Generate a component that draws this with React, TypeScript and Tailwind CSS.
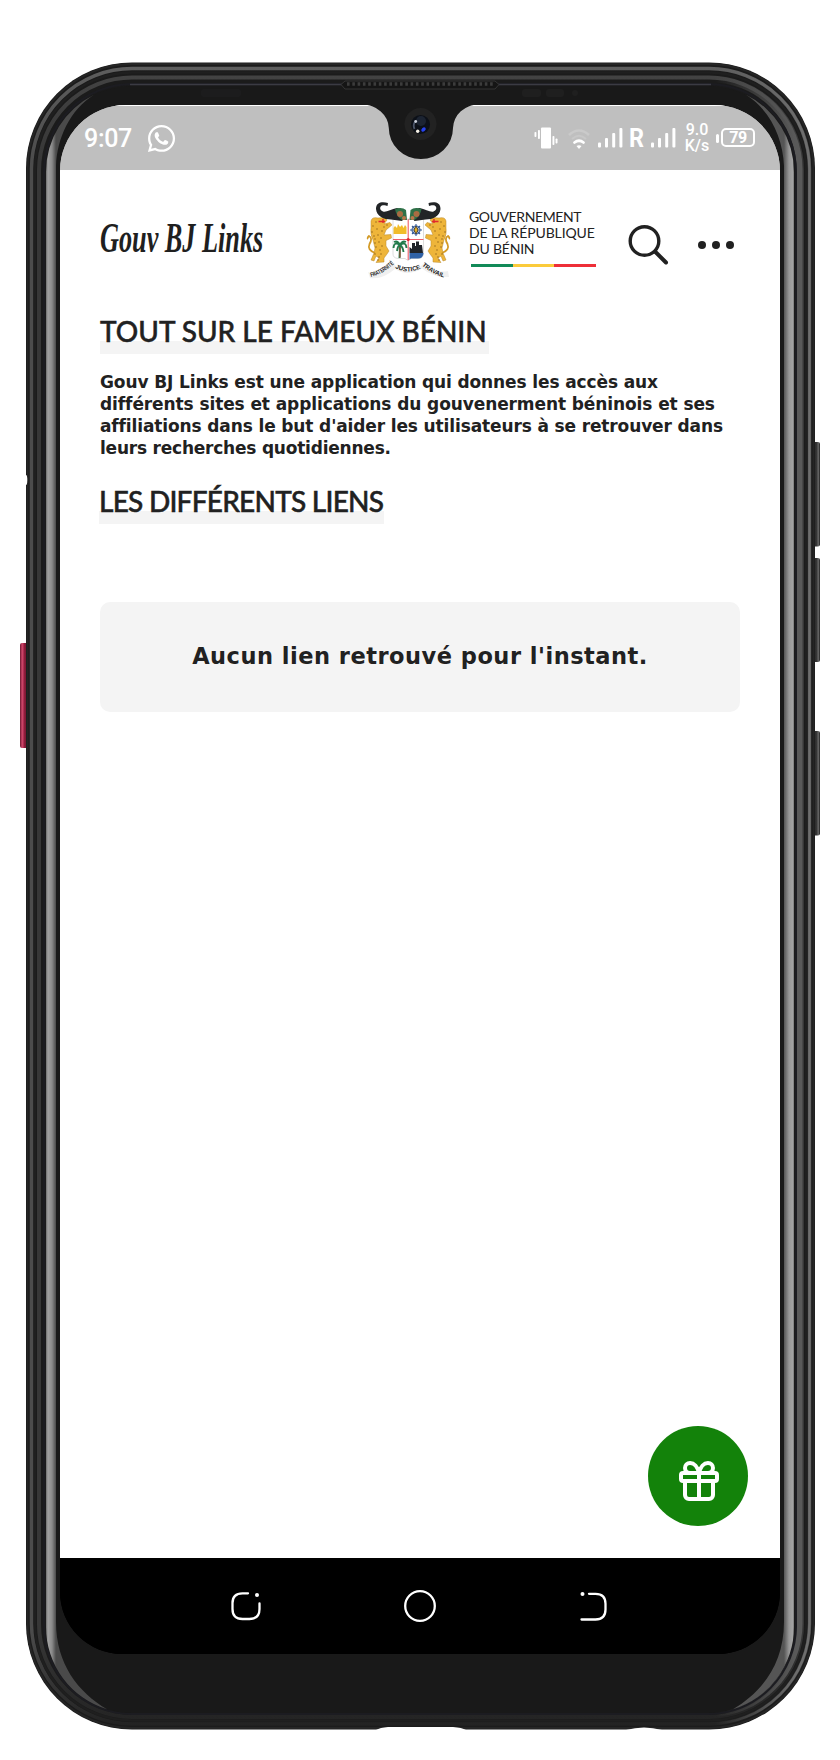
import React from "react";
import { Gift } from "lucide-react";
import { FaWhatsapp } from "react-icons/fa";

const leopardSpots = [
  [7, 25], [11, 28], [6, 31], [12, 34], [9, 38], [13, 41], [10, 46], [14, 49], [9, 53], [13, 56], [16, 30], [18, 26],
  [10, 21], [15, 37], [16, 45], [8, 35], [15, 53], [12, 59], [9, 42], [21, 24],
];

function Shell() {
  return (
    <svg className="absolute inset-0" width="840" height="1760" viewBox="0 0 840 1760" aria-hidden="true">
      <defs>
        <linearGradient id="stripL" x1="46" x2="56" y1="0" y2="0" gradientUnits="userSpaceOnUse">
          <stop offset="0" stopColor="#6e6e6e" />
          <stop offset=".2" stopColor="#a2a2a2" />
          <stop offset=".6" stopColor="#8a8a8a" />
          <stop offset="1" stopColor="#4a4a4a" />
        </linearGradient>
        <linearGradient id="stripR" x1="784" x2="794" y1="0" y2="0" gradientUnits="userSpaceOnUse">
          <stop offset="0" stopColor="#555" />
          <stop offset=".5" stopColor="#979797" />
          <stop offset=".85" stopColor="#a2a2a2" />
          <stop offset="1" stopColor="#777" />
        </linearGradient>
        <linearGradient id="bandA" x1="0" x2="0" y1="62" y2="1730" gradientUnits="userSpaceOnUse">
          <stop offset="0" stopColor="#5e5e5e" />
          <stop offset=".06" stopColor="#4c4c4c" />
          <stop offset=".94" stopColor="#4c4c4c" />
          <stop offset="1" stopColor="#202020" />
        </linearGradient>
        <linearGradient id="bandB" x1="0" x2="0" y1="62" y2="1730" gradientUnits="userSpaceOnUse">
          <stop offset="0" stopColor="#444" />
          <stop offset=".06" stopColor="#373737" />
          <stop offset=".94" stopColor="#373737" />
          <stop offset="1" stopColor="#222" />
        </linearGradient>
        <linearGradient id="fadeThin" x1="715" x2="800" y1="0" y2="0" gradientUnits="userSpaceOnUse">
          <stop offset="0" stopColor="#6e6e6e" stopOpacity="0" />
          <stop offset="1" stopColor="#6e6e6e" />
        </linearGradient>
        <linearGradient id="fadeWide" x1="715" x2="795" y1="0" y2="0" gradientUnits="userSpaceOnUse">
          <stop offset="0" stopColor="#595959" stopOpacity="0" />
          <stop offset="1" stopColor="#595959" />
        </linearGradient>
        <linearGradient id="red" x1="0" x2="1" y1="0" y2="0">
          <stop offset="0" stopColor="#6d1730" />
          <stop offset=".25" stopColor="#d2486c" />
          <stop offset=".5" stopColor="#8f1c3c" />
          <stop offset="1" stopColor="#54101f" />
        </linearGradient>
        <linearGradient id="key" x1="0" x2="1" y1="0" y2="0">
          <stop offset="0" stopColor="#222" />
          <stop offset=".55" stopColor="#333" />
          <stop offset=".8" stopColor="#666" />
          <stop offset="1" stopColor="#1c1c1c" />
        </linearGradient>
      </defs>
      <rect x="20" y="643" width="9" height="105" rx="2" fill="url(#red)" />
      <rect x="812" y="442" width="8" height="104.500" rx="2" fill="url(#key)" />
      <rect x="812" y="558" width="8" height="104" rx="2" fill="url(#key)" />
      <rect x="812" y="731" width="8" height="104.500" rx="2" fill="url(#key)" />
      <rect x="26" y="62.500" width="789" height="1667" rx="106" fill="#1b1b1b" />
      <g fill="none">
        <rect x="27.500" y="64" width="786" height="1664" rx="104.500" stroke="#252525" strokeWidth="2" />
        <rect x="31.500" y="68.500" width="778" height="1655.500" rx="100.500" stroke="url(#bandA)" strokeWidth="3.500" />
        <rect x="35" y="72.500" width="771" height="1648" rx="97" stroke="#1f1f1f" strokeWidth="2.500" />
        <rect x="39" y="77.500" width="763" height="1639.500" rx="93" stroke="url(#bandB)" strokeWidth="4" />
        <path d="M709 68.500A100.500 100.500 0 0 1 809.500 169V1623.500A100.500 100.500 0 0 1 709 1724" stroke="url(#fadeThin)" strokeWidth="2.500" />
        <path d="M709 79A90.500 90.500 0 0 1 799.500 169V1623.500A90.500 90.500 0 0 1 709 1714" stroke="url(#fadeWide)" strokeWidth="6" />
        <rect x="44" y="84" width="752" height="1630" rx="88" stroke="#1c1c21" strokeWidth="2" />
        <path d="M130 84.500H344M498 84.500H711" stroke="#3b3b43" strokeWidth="1.500" />
      </g>
      <rect x="46" y="86" width="748" height="1627" rx="86" fill="#191919" />
      <path d="M94 94.800A86 86 0 0 0 46 172V1627A86 86 0 0 0 107 1709.300C78 1692 56 1664 56 1622V166C57 138 70 110 94 94.800Z" fill="url(#stripL)" />
      <path d="M746 94.800A86 86 0 0 1 794 172V1627A86 86 0 0 1 733 1709.300C762 1692 784 1664 784 1622V166C783 138 770 110 746 94.800Z" fill="url(#stripR)" />
      <path d="M376 1730Q380 1727.500 388 1727H453Q462 1727.500 466 1730Z" fill="#fff" />
      <path d="M626 1730Q644 1725 662 1730Z" fill="#fff" />
      <ellipse cx="26" cy="480" rx="1.300" ry="5" fill="#fff" />
      <path d="M341 84.500L345 81H495L499 84.500L495 89H345Z" fill="#151515" stroke="#353535" strokeWidth="1" />
      <path d="M347 84H494" stroke="#3c3c3c" strokeWidth="3.500" strokeDasharray="2.600 2.700" />
      <rect x="201" y="89" width="40" height="8" rx="2" fill="#1c1c1d" />
      <rect x="522" y="89" width="19" height="8" rx="3" fill="#1f1f1f" />
      <rect x="546" y="89" width="18" height="8" rx="3" fill="#1f1f1f" />
      <circle cx="575" cy="93" r="3" fill="#1f1f1f" />
    </svg>
  );
}

function Notch() {
  return (
    <svg className="absolute left-1/2 top-0 -translate-x-1/2" width="120" height="56" viewBox="360 105 120 56" aria-hidden="true">
      <path d="M362 104.500A27 24 0 0 1 388.800 128A32 31 0 0 0 453 128A26 24 0 0 1 479 104.500Z" fill="#191919" />
      <circle cx="420.500" cy="124" r="16" fill="#222" />
      <circle cx="420.500" cy="124.500" r="9.500" fill="#0c1018" />
      <circle cx="421" cy="121" r="5" fill="#1c2432" />
      <path d="M414.500 129Q412.500 125 415.500 121" stroke="#4a5468" strokeWidth="1.800" fill="none" />
      <circle cx="415.700" cy="121.500" r="1.400" fill="#c9cfda" />
      <circle cx="417.700" cy="131.300" r="1.700" fill="#f4efe4" />
      <ellipse cx="423.500" cy="129.500" rx="2.600" ry="1.800" fill="#2742f0" transform="rotate(-45 423.500 129.500)" />
    </svg>
  );
}

function Signal({ className }: { className: string }) {
  return (
    <svg className={className} width="25" height="20" viewBox="0 0 25 20" fill="#fff">
      <rect x="0" y="14.500" width="3" height="5" rx="1" />
      <rect x="7" y="10" width="3" height="9.500" rx="1" />
      <rect x="14.200" y="5" width="3" height="14.500" rx="1" />
      <rect x="21.400" y="0" width="3" height="19.500" rx="1" />
    </svg>
  );
}

function StatusBar() {
  return (
    <div className="flex h-[65px] shrink-0 items-center border-t border-white bg-[#bfbfbf] pl-6 pr-[25px] font-['Roboto',sans-serif] text-white">
      <span className="w-[48px] text-[25px] font-medium leading-none tracking-[-0.3px]">9:07</span>
      <FaWhatsapp className="ml-[14px] size-[31px]" />
      <div className="ml-auto flex items-center">
        <svg width="24" height="22" viewBox="0 0 24 22" fill="#fff">
          <rect x="7" y="0.500" width="10" height="21" rx="1" />
          <rect x="4" y="3" width="1.900" height="9" rx=".8" />
          <rect x="0.500" y="5" width="1.900" height="5" rx=".8" />
          <rect x="18.500" y="9" width="1.900" height="9" rx=".8" />
          <rect x="21.600" y="11.500" width="1.900" height="5" rx=".8" />
        </svg>
        <svg className="ml-[9px] mt-px" width="24" height="22" viewBox="0 0 24 22" fill="none" stroke="#fff">
          <path d="M2 7Q12 -2 22 7" stroke="#cacaca" strokeWidth="2.500" />
          <path d="M5 11Q12 4.500 19 11" stroke="#c8c8c8" strokeWidth="2" />
          <path d="M7.500 14.500Q12 11 16.500 14.500" strokeWidth="2.800" strokeLinecap="round" />
          <path d="M9.500 18Q12 16.500 14.500 18L12 21Z" fill="#fff" stroke="none" />
        </svg>
        <Signal className="ml-[7px]" />
        <span className="ml-[6px] w-[14px] origin-left scale-x-90 text-[26px] font-bold leading-none">R</span>
        <Signal className="ml-[8px]" />
        <div className="ml-[8px] w-[26px] text-center text-[16px] font-medium leading-4">
          <div>9.0</div>
          <div>K/s</div>
        </div>
        <div className="ml-[6px] h-[9px] w-[3px] rounded-sm bg-white" />
        <div className="ml-[2px] mt-[-1px] flex h-[19px] w-[34px] items-center justify-center rounded-[5px] border-2 border-white text-[16px] font-bold leading-none tracking-[-0.5px]">
          79
        </div>
      </div>
    </div>
  );
}

function Leopard() {
  return (
    <g>
      <path
        d="M5 20Q6 15.500 12 17L19 16.500L21 19L18 23L24 21.500L26 24L20 29L18 34L25 33.500L25.500 37L20 39.500L20 45L23 50L21 53L18 57L18 61L10 61.500L13 57L10 55L8 60L5 59L8 52L9 47L7 39Q4 33 5 27Z"
        fill="#eeb53a"
        stroke="#b8882a"
        strokeWidth=".5"
      />
      <path d="M9 52Q1 49 3.500 43Q7 37 3 35Q1 37 2 38" fill="none" stroke="#d39a26" strokeWidth="1.800" />
      <path d="M12.500 20.500H19M17 18V22" stroke="#e0282e" strokeWidth="1.400" />
      {leopardSpots.map(([x, y]) => (
        <circle key={`${x}-${y}`} cx={x} cy={y} r=".7" fill="#8a6118" />
      ))}
    </g>
  );
}

function Horn() {
  return (
    <g>
      <path
        d="M22 2C17 0.500 10 0.500 10 8C10.500 15.500 18 18.500 25 18.500L36 20L40 15L39 9L31 7C25 8.500 20 11.500 17 10.500C13 9 13.500 4.500 17 4.200C19 4 20 4.500 21.500 5Z"
        fill="#222527"
      />
      <path d="M29 8Q36 5.500 40 9L41 19H36Q30 15 29 8Z" fill="#2f7148" />
      <circle cx="34" cy="13" r="3" fill="#a96c42" />
      <circle cx="38" cy="17" r="2" fill="#b9764a" />
    </g>
  );
}

function Emblem() {
  return (
    <svg className="shrink-0" width="86" height="80" viewBox="0 0 86 80">
      <defs>
        <path id="ribbon-left" d="M5 76Q17 73 29 62" />
        <path id="ribbon-mid" d="M29 67Q42 74 57 66.500" />
        <path id="ribbon-right" d="M56 64.500Q66 73 79 77" />
      </defs>
      <Leopard />
      <g transform="translate(85 0) scale(-1 1)">
        <Leopard />
      </g>
      <path d="M2 71Q12 77 26 61L31 66Q42 72 54 66L59 61Q70 73 82 70L83 76Q68 77 56 67.500Q42 76 29 68Q16 79 4 77Z" fill="#f0f0f0" />
      <path d="M27 18H57.500V53Q57 57.500 52 57.500H45L42 59.500L39 57.500H32Q27 57 27 53Z" fill="#fff" stroke="#cfcfcf" strokeWidth=".7" />
      <path d="M27.500 33V27L29 25L31 27L32 23L34 26L36 24L37.500 27L39 24L40.500 26V33Z" fill="#f1bc2b" />
      <g stroke="#345a98" strokeWidth="1.100">
        <path d="M44 29H56M50 23V35M46 25L54 33M54 25L46 33" />
        <circle cx="50" cy="29" r="4" fill="none" />
      </g>
      <path d="M50 25L52 29L50 33L48 29Z" fill="#eab225" stroke="#2e2a1c" strokeWidth=".7" />
      <path d="M34 44L33.500 57M34 44Q28 40 27.500 47M34 44Q32 44 31 50M34 44Q40 40 40.500 47M34 44Q37 46 37.500 51M34 44Q32 39 28 41M34 44Q36 39 40 41" fill="none" stroke="#237a4b" strokeWidth="1.900" />
      <path d="M34 46V56.500" stroke="#9b4934" strokeWidth="1.200" />
      <path d="M43.500 46L46 48L46 42H49V45H50V40.500H53V44H56L57 52H43.500Z" fill="#20242a" />
      <path d="M43.500 52H57.500Q57 57.500 52 57.500H45L43.500 58.500Z" fill="#2f62a7" />
      <path d="M27 38.500H57.500M42.200 18V59" stroke="#ee5d69" strokeWidth="1.100" />
      <circle cx="42.200" cy="38.500" r="1.600" fill="#dd2530" />
      <Horn />
      <g transform="translate(84.500 0) scale(-1 1)">
        <Horn />
      </g>
      <g fontFamily="'Liberation Sans', sans-serif" fontWeight="700" fontSize="6.200" fill="#222">
        <text>
          <textPath href="#ribbon-left" textLength="27" lengthAdjust="spacingAndGlyphs">FRATERNITÉ</textPath>
        </text>
        <text>
          <textPath href="#ribbon-mid" textLength="27">JUSTICE</textPath>
        </text>
        <text>
          <textPath href="#ribbon-right" textLength="25" lengthAdjust="spacingAndGlyphs">TRAVAIL</textPath>
        </text>
      </g>
    </svg>
  );
}

function Header() {
  return (
    <header className="flex h-[135px] shrink-0 items-start pl-10 pr-[46px] pt-[31px]">
      <div className="mt-[7px] w-[266px] shrink-0">
        <span className="inline-block origin-left scale-x-[0.61] whitespace-nowrap font-['Liberation_Serif',serif] text-[43px] font-bold italic leading-[60px] text-[#1f1f1f]">
          Gouv BJ Links
        </span>
      </div>
      <Emblem />
      <div className="ml-[17px] mt-[7.5px] w-[128px] shrink-0 whitespace-nowrap font-['Lato',sans-serif] text-[14px] leading-[16.2px] text-[#222]">
        <div className="tracking-[-0.4px]">GOUVERNEMENT</div>
        <div className="tracking-[-0.1px]">DE LA RÉPUBLIQUE</div>
        <div className="tracking-[-0.2px]">DU BÉNIN</div>
        <div className="ml-[2px] mt-[7px] flex h-[3px] w-[125px]">
          <div className="flex-1 bg-[#128a58]" />
          <div className="flex-1 bg-[#fbcb3b]" />
          <div className="flex-1 bg-[#ee2f38]" />
        </div>
      </div>
      <svg className="ml-[31px] mt-[23px] shrink-0" width="42" height="42" viewBox="0 0 42 42" fill="none" stroke="#212121">
        <circle cx="16.500" cy="17" r="14.300" strokeWidth="3.400" />
        <path d="M27.500 28L38 38.500" strokeWidth="4" strokeLinecap="round" />
      </svg>
      <div className="ml-auto mt-[40px] flex gap-[6px]">
        <i className="size-2 rounded-full bg-[#212121]" />
        <i className="size-2 rounded-full bg-[#212121]" />
        <i className="size-2 rounded-full bg-[#212121]" />
      </div>
    </header>
  );
}

function Heading({ children, className }: { children: string; className: string }) {
  return (
    <h2
      className={`${className} h-[34px] whitespace-nowrap bg-[linear-gradient(to_top,#f4f4f4_12.5px,transparent_12.5px)] font-['Lato',sans-serif] text-[28px] font-medium leading-[23px] text-[#212121] [-webkit-text-stroke:0.5px_#212121]`}
    >
      {children}
    </h2>
  );
}

function NavBar() {
  return (
    <nav className="flex h-24 shrink-0 items-center justify-center bg-black">
      <svg className="mr-[142px]" width="32" height="32" viewBox="0 0 32 32" fill="none" stroke="#fff" strokeWidth="2.300" strokeLinecap="round">
        <path d="M18 3.300H12.500Q2.500 3.300 2.500 13V19Q2.500 29 12.500 29H19.500Q29.500 29 29.500 19V13.500" />
        <circle cx="27" cy="5" r="2" fill="#fff" stroke="none" />
      </svg>
      <svg width="32" height="32" viewBox="0 0 32 32" fill="none" stroke="#fff" strokeWidth="2.300">
        <circle cx="16" cy="16" r="14.800" />
      </svg>
      <svg className="ml-[142px]" width="32" height="32" viewBox="0 0 32 32" fill="none" stroke="#fff" strokeWidth="2.300" strokeLinecap="round">
        <path d="M11 3.800H17.500Q27.500 3.800 27.500 13.800V19.500Q27.500 29.500 17.500 29.500H3.500" />
        <circle cx="4.500" cy="4" r="2" fill="#fff" stroke="none" />
      </svg>
    </nav>
  );
}

export default function App() {
  return (
    <div className="relative h-[1760px] w-[840px] overflow-hidden bg-white px-[60px] pt-[105px]">
      <Shell />
      <div className="relative flex h-[1549px] flex-col overflow-hidden rounded-b-[62px] rounded-t-[66px] bg-[linear-gradient(#bfbfbf_50%,#000_50%)]">
        <StatusBar />
        <div className="flex flex-1 flex-col bg-white">
          <Header />
          <main className="flex flex-1 flex-col items-start px-10 pt-[15px]">
            <Heading className="w-[389px] tracking-[0px]">TOUT SUR LE FAMEUX BÉNIN</Heading>
            <div className="mt-[17px] whitespace-nowrap font-['DejaVu_Sans',sans-serif] text-[17px] font-bold leading-[22px] text-[#212121]">
              <div className="tracking-[-0.12px]">Gouv BJ Links est une application qui donnes les accès aux</div>
              <div className="tracking-[-0.1px]">différents sites et applications du gouvenerment béninois et ses</div>
              <div className="tracking-[-0.13px]">affiliations dans le but d'aider les utilisateurs à se retrouver dans</div>
              <div className="tracking-[-0.22px]">leurs recherches quotidiennes.</div>
            </div>
            <Heading className="ml-[-1px] mt-[31px] w-[285px] tracking-[-0.75px]">LES DIFFÉRENTS LIENS</Heading>
            <div className="mt-[78px] flex h-[110px] w-full items-center justify-center rounded-[10px] bg-[#f4f4f4] pb-px font-['DejaVu_Sans',sans-serif] text-[22.5px] font-bold tracking-[0.5px] text-[#212121]">
              Aucun lien retrouvé pour l'instant.
            </div>
          </main>
        </div>
        <NavBar />
        <button className="absolute bottom-[128px] right-8 flex size-[100px] items-center justify-center rounded-full bg-[#13820a] pl-[2px] pt-[10px]" aria-label="Gift">
          <Gift className="size-12 text-white" strokeWidth={2} />
        </button>
        <Notch />
      </div>
    </div>
  );
}
